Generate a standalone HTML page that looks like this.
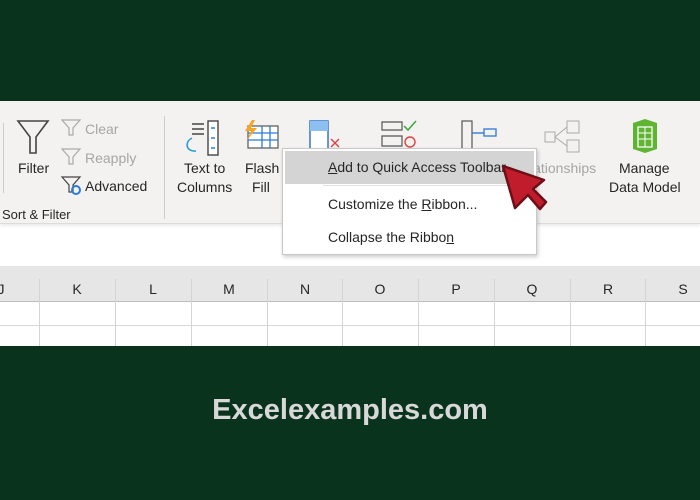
<!DOCTYPE html>
<html><head><meta charset="utf-8"><style>
*{margin:0;padding:0;box-sizing:border-box}
body{width:700px;height:500px;background:#0a331e;position:relative;overflow:hidden;font-family:"Liberation Sans",sans-serif}
.shot{position:absolute;left:0;top:101px;width:700px;height:245px;background:#fff;overflow:hidden}
.ribbon{position:absolute;left:0;top:0;width:700px;height:123px;background:#f3f2f1;border-bottom:1px solid #dcdcdc;box-shadow:0 2px 3px rgba(0,0,0,.08)}
.t{position:absolute;font-size:14px;color:#262626;white-space:nowrap;line-height:18px}
.g{color:#a6a6a6}
.hdr{position:absolute;left:0;top:165px;width:700px;height:36px;background:#e6e6e6;border-bottom:1px solid #bdbdbd}
.col{position:absolute;top:180px;font-size:14px;color:#262626;width:76px;text-align:center}
.vl{position:absolute;width:1px;background:#d4d4d4}
.menu{position:absolute;left:282px;top:148px;width:255px;height:107px;background:#fff;border:1px solid #c8c8c8;box-shadow:1px 2px 4px rgba(0,0,0,.2)}
.mi{position:absolute;left:45px;font-size:14px;color:#262626}
.foot{position:absolute;left:0;top:394px;width:700px;text-align:center;font-size:29px;font-weight:bold;color:#d8d8d8}
</style></head><body>
<div class="shot">
<div class="ribbon">
 <div style="position:absolute;left:3px;top:22px;width:1px;height:70px;background:#ccc"></div>
 <div style="position:absolute;left:164px;top:15px;width:1px;height:103px;background:#ccc"></div>
 <svg style="position:absolute;left:16px;top:18px" width="34" height="36" viewBox="0 0 34 36"><path d="M2 2H32L20 18V34H14V18Z" fill="none" stroke="#444" stroke-width="1.6"/></svg>
 <div class="t" style="left:18px;top:58px">Filter</div>
 <svg style="position:absolute;left:61px;top:18px" width="22" height="18"><path d="M1 1H19L12 9V16H8V9Z" fill="none" stroke="#aaa" stroke-width="1.2"/></svg>
 <div class="t g" style="left:85px;top:19px">Clear</div>
 <svg style="position:absolute;left:61px;top:47px" width="22" height="18"><path d="M1 1H19L12 9V16H8V9Z" fill="none" stroke="#aaa" stroke-width="1.2"/></svg>
 <div class="t g" style="left:85px;top:48px">Reapply</div>
 <svg style="position:absolute;left:61px;top:75px" width="22" height="20"><path d="M1 1H19L12 9V16H8V9Z" fill="none" stroke="#444" stroke-width="1.2"/><circle cx="15" cy="14" r="4" fill="none" stroke="#2b7bd6" stroke-width="2"/></svg>
 <div class="t" style="left:85px;top:76px">Advanced</div>
 <div class="t" style="left:2px;top:105px;font-size:13px">Sort &amp; Filter</div>
 <svg style="position:absolute;left:184px;top:19px" width="40" height="36"><path d="M8 4H20M8 9H20M8 14H20" stroke="#444" stroke-width="1.4"/><rect x="24" y="1" width="10" height="34" fill="#fff" stroke="#444" stroke-width="1.4"/><path d="M27 8H31M27 18H31M27 28H31" stroke="#2b7bd6" stroke-width="1.4"/><path d="M8 18C0 22 2 32 12 31" fill="none" stroke="#2b9bd6" stroke-width="1.5"/></svg>
 <div class="t" style="left:184px;top:58px">Text to</div>
 <div class="t" style="left:177px;top:77px">Columns</div>
 <svg style="position:absolute;left:242px;top:19px" width="38" height="30"><rect x="6" y="6" width="30" height="22" fill="#fff" stroke="#555" stroke-width="1.2"/><path d="M6 13H36M6 20H36M20 6V28M28 6V28" stroke="#2b7bd6" stroke-width="1.3"/><path d="M10 0L3 11H9L5 20L15 8H9L13 0Z" fill="#f5a623"/></svg>
 <div class="t" style="left:245px;top:58px">Flash</div>
 <div class="t" style="left:252px;top:77px">Fill</div>
 <svg style="position:absolute;left:309px;top:19px" width="34" height="30"><rect x="1" y="1" width="18" height="28" fill="#fff" stroke="#2b6cc4" stroke-width="1.4"/><rect x="1" y="1" width="18" height="10" fill="#8cc0f0"/><path d="M22 19L30 27M30 19L22 27" stroke="#e04040" stroke-width="1.4"/></svg>
 <svg style="position:absolute;left:380px;top:19px" width="40" height="30"><path d="M2 2H22V10H2ZM2 16H22V26H2Z" fill="none" stroke="#555" stroke-width="1.2"/><path d="M24 6L28 10L36 1" fill="none" stroke="#3aa83a" stroke-width="1.5"/><circle cx="30" cy="22" r="5" fill="none" stroke="#e04040" stroke-width="1.4"/></svg>
 <svg style="position:absolute;left:460px;top:19px" width="40" height="30"><rect x="2" y="1" width="10" height="28" fill="none" stroke="#555" stroke-width="1.2"/><path d="M12 13H24" stroke="#2b7bd6" stroke-width="1.4"/><rect x="24" y="9" width="12" height="7" fill="none" stroke="#2b7bd6" stroke-width="1.3"/></svg>
 <svg style="position:absolute;left:543px;top:19px" width="40" height="36"><rect x="2" y="12" width="10" height="10" fill="none" stroke="#aaa"/><rect x="24" y="1" width="12" height="12" fill="none" stroke="#aaa"/><rect x="24" y="20" width="12" height="12" fill="none" stroke="#aaa"/><path d="M12 17L24 7M12 17L24 26" stroke="#aaa"/></svg>
 <div class="t g" style="left:530px;top:58px">lationships</div>
 <svg style="position:absolute;left:629px;top:18px" width="32" height="34"><path d="M4 4L16 0L28 4V30L16 34L4 30Z" fill="#5fb532"/><path d="M9 8H23V28H9Z" fill="none" stroke="#fff" stroke-width="1.3"/><path d="M9 14H23M9 20H23M16 8V28" stroke="#fff" stroke-width="1"/></svg>
 <div class="t" style="left:619px;top:58px">Manage</div>
 <div class="t" style="left:609px;top:77px">Data Model</div>
</div>
<div class="hdr"></div>
<div style="position:absolute;left:0;top:224px;width:700px;height:1px;background:#d8d8d8"></div>
<div class="vl" style="left:39px;top:178px;height:67px"></div>
<div class="vl" style="left:115px;top:178px;height:67px"></div>
<div class="vl" style="left:191px;top:178px;height:67px"></div>
<div class="vl" style="left:267px;top:178px;height:67px"></div>
<div class="vl" style="left:342px;top:178px;height:67px"></div>
<div class="vl" style="left:418px;top:178px;height:67px"></div>
<div class="vl" style="left:494px;top:178px;height:67px"></div>
<div class="vl" style="left:570px;top:178px;height:67px"></div>
<div class="vl" style="left:645px;top:178px;height:67px"></div>
<div class="col" style="left:-37px">J</div>
<div class="col" style="left:39px">K</div>
<div class="col" style="left:115px">L</div>
<div class="col" style="left:191px">M</div>
<div class="col" style="left:267px">N</div>
<div class="col" style="left:342px">O</div>
<div class="col" style="left:418px">P</div>
<div class="col" style="left:494px">Q</div>
<div class="col" style="left:570px">R</div>
<div class="col" style="left:645px">S</div>
</div>
<div class="menu">
 <div style="position:absolute;left:2px;top:2px;width:249px;height:33px;background:#d4d4d4"></div>
 <div style="position:absolute;left:40px;top:36px;width:210px;height:1px;background:#e0e0e0"></div>
 <div class="mi" style="top:10px"><u>A</u>dd to Quick Access Toolbar</div>
 <div class="mi" style="top:47px">Customize the <u>R</u>ibbon...</div>
 <div class="mi" style="top:80px">Collapse the Ribbo<u>n</u></div>
</div>
<svg style="position:absolute;left:500px;top:162px" width="52" height="54" viewBox="0 0 52 54"><path d="M3 4L44 18L33 27L46 40L40 47L28 33L15 46Z" fill="#c01c2c" stroke="#6e0f18" stroke-width="2.5" stroke-linejoin="round"/></svg>
<div class="foot">Excelexamples.com</div>
</body></html>
